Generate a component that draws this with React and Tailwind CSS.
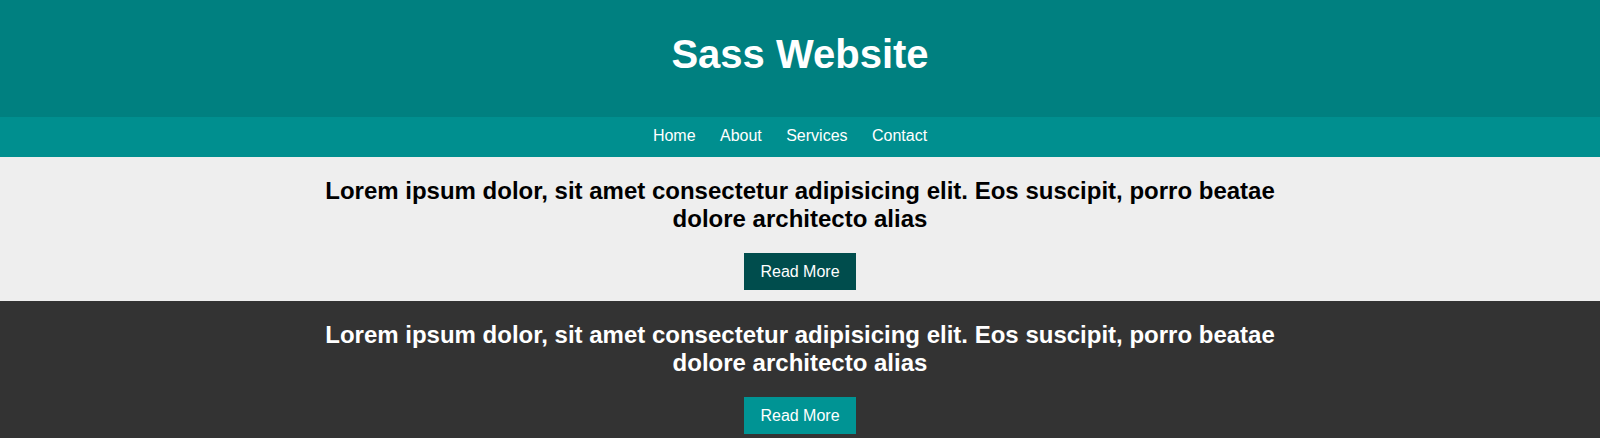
const NAV = ['Home', 'About', 'Services', 'Contact'];

const headline = 'Lorem ipsum dolor, sit amet consectetur adipisicing elit. Eos suscipit, porro beatae dolore architecto alias';

function Section({ dark }) {
  return (
    <section className={`pt-[20px] pb-[11px] text-center ${dark ? 'bg-[#333333] text-white' : 'bg-[#eeeeee] text-black'}`}>
      <h2 className="mx-auto max-w-[960px] text-[24px] leading-[27.6px] font-bold">{headline}</h2>
      <div className="mt-[21px] flex justify-center">
        <a href="#" className={`h-[37px] px-4 flex items-center text-white text-base ${dark ? 'bg-[#009494]' : 'bg-[#004d4d]'}`}>Read More</a>
      </div>
    </section>
  );
}

export default function App() {
  return (
    <div className="min-h-screen bg-white font-['Liberation_Sans',Arial,sans-serif]">
      <header className="bg-[#008080] pt-[31px] pb-[40px] text-center">
        <h1 className="text-[40px] leading-[46px] font-bold text-white">Sass Website</h1>
      </header>
      <nav className="bg-[#008f8f] h-10 pb-0.5 flex items-center justify-center gap-[4.4px]">
        {NAV.map(n => (
          <a key={n} href="#" className="mr-5 text-base text-white">{n}</a>
        ))}
      </nav>
      <Section />
      <Section dark />
    </div>
  );
}
